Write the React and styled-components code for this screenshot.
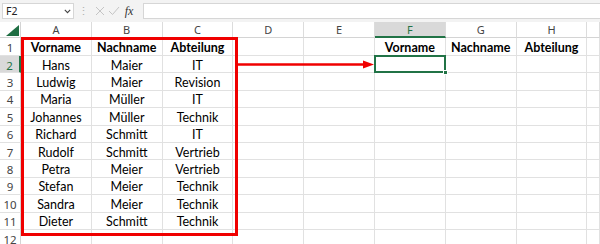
import React from "react";
import styled, { createGlobalStyle, css } from "styled-components";

const Global = createGlobalStyle`
  html, body { margin: 0; padding: 0; background: #fff; }
  body { width: 600px; height: 244px; overflow: hidden; }
`;

const GREEN = "#217346";

const App_ = styled.div`
  position: relative;
  width: 600px;
  height: 244px;
  overflow: hidden;
  font-family: Lato, "Liberation Sans", sans-serif;
`;

const FormulaBar = styled.div`
  height: 22px;
  box-sizing: border-box;
  background: #f3f3f3;
  display: flex;
  align-items: flex-start;
  padding: 3px 0 0 2px;
  gap: 0;
`;

const NameBox = styled.div`
  width: 72px;
  height: 16px;
  box-sizing: border-box;
  background: #fff;
  border: 1px solid #d6d6d6;
  display: flex;
  align-items: center;
  justify-content: space-between;
  padding: 0 2px 0 3px;
  font-family: "Noto Sans", "Liberation Sans", sans-serif;
  font-size: 10.5px;
  color: #222;
`;

const Dots = styled.div`
  width: 18px;
  display: flex;
  justify-content: center;
  color: #b0b0b0;
  font-size: 11px;
  line-height: 16px;
`;

const IconSlot = styled.div`
  width: ${(p) => p.$w || 14}px;
  height: 16px;
  display: flex;
  align-items: center;
  justify-content: center;
`;

const Fx = styled.div`
  width: 16px;
  height: 16px;
  font-family: "Liberation Serif", serif;
  font-style: italic;
  font-size: 12px;
  color: #333;
  display: flex;
  align-items: center;
  justify-content: center;
`;

const FormulaInput = styled.div`
  flex: 1;
  height: 16px;
  margin-left: 6px;
  box-sizing: border-box;
  background: #fff;
  border: 1px solid #d6d6d6;
  border-right: none;
`;

const Grid = styled.div`
  display: grid;
  grid-template-columns: 21px repeat(8, 70.8px) 1fr;
  grid-template-rows: 16px 18px repeat(11, 17.4px);
`;

const Corner = styled.div`
  background: #fff;
  border-right: 1px solid #d4d4d4;
  border-bottom: 1px solid #d4d4d4;
  box-sizing: border-box;
  position: relative;
`;

const ColHead = styled.div`
  box-sizing: border-box;
  background: ${(p) => (p.$active ? "#d9d9d9" : "#fff")};
  border-right: 1px solid #dcdcdc;
  border-bottom: ${(p) => (p.$active ? `2px solid ${GREEN}` : "1px solid #d4d4d4")};
  display: flex;
  align-items: center;
  justify-content: center;
  font-family: "Noto Sans", "Liberation Sans", sans-serif;
  font-size: 11px;
  color: ${(p) => (p.$active ? GREEN : "#444")};
  padding-top: ${(p) => (p.$active ? "1px" : "0")};
`;

const RowHead = styled.div`
  box-sizing: border-box;
  background: ${(p) => (p.$active ? "#d9d9d9" : "#fff")};
  border-right: ${(p) => (p.$active ? `2px solid ${GREEN}` : "1px solid #d4d4d4")};
  border-bottom: 1px solid #e1e1e1;
  display: flex;
  align-items: center;
  justify-content: center;
  font-family: "Noto Sans", "Liberation Sans", sans-serif;
  font-size: 11.5px;
  color: ${(p) => (p.$active ? GREEN : "#444")};
  padding-top: 2px;
`;

const Cell = styled.div`
  box-sizing: border-box;
  position: relative;
  border-right: 1px solid #e1e1e1;
  border-bottom: 1px solid #e1e1e1;
  display: flex;
  align-items: center;
  justify-content: center;
  font-size: 12.5px;
  color: #000;
  padding-top: 2px;
  white-space: nowrap;
  font-weight: ${(p) => (p.$bold ? 700 : 400)};
  ${(p) =>
    p.$selected &&
    css`
      &::after {
        content: "";
        position: absolute;
        left: -1px;
        top: -1px;
        right: -1px;
        bottom: -1px;
        border: 2px solid ${GREEN};
      }
      &::before {
        content: "";
        position: absolute;
        right: -3px;
        bottom: -3px;
        width: 5px;
        height: 5px;
        background: ${GREEN};
        border: 1px solid #fff;
        box-sizing: border-box;
        z-index: 2;
      }
    `}
`;

const Overlay = styled.svg`
  position: absolute;
  left: 0;
  top: 0;
  width: 600px;
  height: 244px;
  pointer-events: none;
`;

const COLS = ["A", "B", "C", "D", "E", "F", "G", "H", ""];

const DATA = [
  ["Vorname", "Nachname", "Abteilung", "", "", "Vorname", "Nachname", "Abteilung"],
  ["Hans", "Maier", "IT"],
  ["Ludwig", "Maier", "Revision"],
  ["Maria", "Müller", "IT"],
  ["Johannes", "Müller", "Technik"],
  ["Richard", "Schmitt", "IT"],
  ["Rudolf", "Schmitt", "Vertrieb"],
  ["Petra", "Meier", "Vertrieb"],
  ["Stefan", "Meier", "Technik"],
  ["Sandra", "Meier", "Technik"],
  ["Dieter", "Schmitt", "Technik"],
  [],
];

export default function App() {
  return (
    <App_>
      <Global />
      <FormulaBar>
        <NameBox>
          <span>F2</span>
          <svg width="7" height="5" viewBox="0 0 7 5">
            <path d="M0.8 0.8 L3.5 3.6 L6.2 0.8" fill="none" stroke="#444" strokeWidth="1.1" />
          </svg>
        </NameBox>
        <Dots>⋮</Dots>
        <IconSlot $w={15}>
          <svg width="10" height="10" viewBox="0 0 10 10">
            <path d="M1 1 L9 9 M9 1 L1 9" stroke="#c4c4c4" strokeWidth="1" fill="none" />
          </svg>
        </IconSlot>
        <IconSlot $w={14}>
          <svg width="12" height="10" viewBox="0 0 12 10">
            <path d="M1 5 L4.5 8.5 L11 1" stroke="#c4c4c4" strokeWidth="1" fill="none" />
          </svg>
        </IconSlot>
        <Fx>fx</Fx>
        <FormulaInput />
      </FormulaBar>
      <Grid>
        <Corner>
          <svg width="21" height="16" viewBox="0 0 21 16" style={{ position: "absolute", left: 0, top: 0 }}>
            <polygon points="6,14 19,14 19,3" fill="#1f6e43" />
          </svg>
        </Corner>
        {COLS.map((c, i) => (
          <ColHead key={i} $active={c === "F"}>
            {c}
          </ColHead>
        ))}
        {DATA.map((row, r) => (
          <React.Fragment key={r}>
            <RowHead $active={r === 1}>{r + 1}</RowHead>
            {COLS.map((_, c) => (
              <Cell key={c} $bold={r === 0} $selected={r === 1 && c === 5}>
                {row[c] || ""}
              </Cell>
            ))}
          </React.Fragment>
        ))}
      </Grid>
      <Overlay viewBox="0 0 600 244">
        <rect x="22.5" y="38.5" width="214" height="196" fill="none" stroke="#f00000" strokeWidth="3" />
        <line x1="238" y1="64.5" x2="366" y2="64.5" stroke="#f00000" strokeWidth="2.5" />
        <polygon points="363,60.5 374,64.5 363,68.5" fill="#f00000" />
      </Overlay>
    </App_>
  );
}
